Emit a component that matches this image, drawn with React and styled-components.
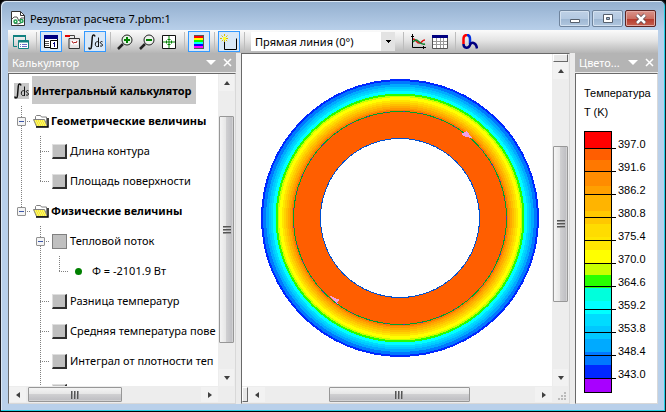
import styled, { createGlobalStyle, css } from 'styled-components';

const GlobalStyle = createGlobalStyle`
  * {
    box-sizing: border-box;
  }

  body {
    margin: 0;
    background: #000;
    font-family: "Noto Sans", "Open Sans", sans-serif;
    font-size: 11px;
    line-height: 16px;
    color: #000;
  }

  button, select {
    font: inherit;
    color: inherit;
    margin: 0;
    padding: 0;
  }
`

const plainButton = css`
  display: flex;
  align-items: center;
  justify-content: center;
  border: 0;
  background: none;
`

const Window = styled.div`
  display: flex;
  flex-direction: column;
  height: 100vh;
  padding: 0 7px 7px 6px;
  border: 1px solid #1c1c22;
  border-bottom: 1px solid #000;
  border-radius: 6px 6px 0 0;
  background: linear-gradient(#93afcf 0, #b9d0ea 30px, #b9d0ea 100%);
  box-shadow: inset -1px -1px 0 #22cfe4, inset 1px 1px 0 #dce8f4;
  overflow: hidden;
`

const TitleBar = styled.header`
  display: flex;
  align-items: flex-start;
  height: 29px;
  flex: none;
  padding-left: 4px;

  > svg {
    margin-top: 9px;
  }
`

const Title = styled.h1`
  flex: 1;
  margin: 10px 0 0 4px;
  font-size: 11px;
  line-height: 16px;
  font-weight: 400;
  white-space: nowrap;
`

const Caption = styled.div`
  display: flex;
  gap: 2px;
  margin: 9px 2px 0 0;
`

const CaptionButton = styled.button`
  ${plainButton}
  width: 31px;
  height: 17px;
  border: 1px solid ${props => props.$close ? '#5c2320' : '#6f849d'};
  border-radius: 2px;
  background: ${props => props.$close
    ? 'linear-gradient(#d9938a 0, #cb6f62 50%, #b5392b 51%, #c5604f 100%)'
    : 'linear-gradient(#bfd1e6 0, #b4c9e1 50%, #9db6d2 51%, #b1c7df 100%)'};
  box-shadow: inset 0 0 0 1px ${props => props.$close ? '#e2a9a2' : '#d3e1f0'};
`

const Client = styled.div`
  display: flex;
  flex-direction: column;
  flex: 1;
  min-height: 0;
  margin-left: 1px;
  background: #ebebeb;
`

const Toolbar = styled.div`
  display: flex;
  align-items: center;
  flex: none;
  height: 23px;
  padding: 0 2px;
  background: linear-gradient(#fbfbfb, #e4e4e4 45%, #b6b6b6);
`

const ToolButton = styled.button`
  ${plainButton}
  width: 22px;
  height: 21px;
  flex: none;
  border: 1px solid ${props => props.$active ? '#3399ff' : 'transparent'};
  background: ${props => props.$active ? '#d9e8f7' : 'none'};
`

const Separator = styled.i`
  width: 8px;
  height: 19px;
  flex: none;
  background: linear-gradient(#bdbdbd, #bdbdbd) 4px 0 / 1px 100% no-repeat;
`

const LineSelect = styled.select`
  width: 144px;
  height: 19px;
  margin: 0 4px 0 3px;
  padding-left: 4px;
  border: 0;
  border-radius: 0;
  appearance: none;
  background:
    linear-gradient(#000, #000) 135px 8px / 5px 1px no-repeat,
    linear-gradient(#000, #000) 136px 9px / 3px 1px no-repeat,
    linear-gradient(#000, #000) 137px 10px / 1px 1px no-repeat,
    linear-gradient(90deg, #fff 130px, #e3e3e3 130px);
`

const Workspace = styled.main`
  display: grid;
  grid-template-columns: 228px minmax(0, 1fr) 83px;
  gap: 5px;
  flex: 1;
  min-height: 0;
`

const Panel = styled.section`
  display: flex;
  flex-direction: column;
  min-width: 0;
  min-height: 0;
`

const PanelHeader = styled.div`
  display: flex;
  align-items: center;
  flex: none;
  gap: 6px;
  height: 19px;
  padding: 0 4px;
  background: #b4b4b4;
  color: #fff;

  h2 {
    flex: 1;
    margin: 0;
    font-size: 11px;
    font-weight: 400;
    overflow: hidden;
    text-overflow: ellipsis;
    white-space: nowrap;
  }
`

const HeaderButton = styled.button`
  ${plainButton}
  width: 10px;
  height: 12px;
  flex: none;
`

const PanelBody = styled.div`
  display: grid;
  grid-template-columns: minmax(0, 1fr) ${props => props.$scroll ? '17px' : ''};
  grid-template-rows: minmax(0, 1fr) ${props => props.$scroll ? '17px' : ''};
  flex: 1;
  min-height: 0;
  margin-top: ${props => props.$header ? '1px' : '0'};
  border: 1px solid #d8d8d8;
  border-top: 1px solid #696969;
  border-left: 1px solid #696969;
  background: #fff;
`

const Tree = styled.ul`
  margin: 0;
  padding: 2px 0 0 3px;
  list-style: none;
  overflow: hidden;
`

const TreeRow = styled.li`
  display: flex;
  align-items: center;
  height: 30px;
`

const dotsDown = 'repeating-linear-gradient(#808080 0 1px, transparent 1px 2px)';
const dotsAcross = 'repeating-linear-gradient(90deg, #808080 0 1px, transparent 1px 2px)';

const guides = {
  none: 'none',
  line: `${dotsDown} 9px 0 / 1px 30px no-repeat`,
  tee: `${dotsDown} 9px 0 / 1px 30px no-repeat, ${dotsAcross} 9px 15px / 10px 1px no-repeat`,
  elbow: `${dotsDown} 9px 0 / 1px 15px no-repeat, ${dotsAcross} 9px 15px / 10px 1px no-repeat`,
};

const Guide = styled.span`
  display: flex;
  align-items: center;
  justify-content: center;
  width: 19px;
  height: 30px;
  flex: none;
  background: ${props => guides[props.$kind]};
`

const Expander = styled.button`
  width: 9px;
  height: 9px;
  border: 1px solid #919191;
  border-radius: 1px;
  background: linear-gradient(#3c57a8, #3c57a8) 1px 3px / 5px 1px no-repeat, #f4f4f4;
`

const NodeIcon = styled.span`
  display: flex;
  align-items: center;
  justify-content: center;
  width: 19px;
  flex: none;

  svg {
    background: ${props => props.$selected ? '#c8c8c8' : 'none'};
  }
`

const Square = styled.i`
  width: 15px;
  height: 15px;
  background: #c0c0c0;
  border: 1px solid ${props => props.$flat ? '#808080' : '#dfdfdf'};
  ${props => !props.$flat && css`
    border-right: 2px solid #303030;
    border-bottom: 2px solid #303030;
  `}
`

const Dot = styled.i`
  width: 7px;
  height: 7px;
  border-radius: 50%;
  background: #008000;
`

const NodeLabel = styled.span`
  padding-left: ${props => props.$value ? '4px' : '1px'};
  white-space: nowrap;
  font-weight: ${props => props.$bold ? 700 : 400};
  ${props => props.$selected && css`
    height: 28px;
    margin: 0 0 2px 1px;
    padding: 0 4px 0 1px;
    line-height: 30px;
    background: #c8c8c8;
  `}
`

const Bar = styled.div`
  display: flex;
  flex-direction: ${props => props.$vertical ? 'column' : 'row'};
  align-items: stretch;
  min-width: 0;
  min-height: 0;
  padding: ${props => props.$vertical ? '0 1px' : '1px 0'};
  background: #ededed;
`

const Arrow = styled.button`
  ${plainButton}
  flex: 0 0 17px;
  background: #f2f2f2;
`

const Track = styled.div`
  flex: ${props => props.$size} 0 0;
`

const Thumb = styled.div`
  display: flex;
  align-items: center;
  justify-content: center;
  flex: ${props => props.$size} 0 0;
  border: 1px solid #979797;
  border-radius: 1px;
  background: linear-gradient(${props => props.$vertical ? '90deg' : '180deg'}, #f4f4f4 0, #e6e6e6 45%, #cfcfd1 50%, #c0c0c4 90%, #dcdcdc 100%);

  i {
    width: 8px;
    height: 8px;
    background: repeating-linear-gradient(${props => props.$vertical ? '180deg' : '90deg'}, #555 0 1px, #999 1px 2px, transparent 2px 3px);
  }
`

const SplitBox = styled.div`
  flex: 0 0 ${props => props.$vertical ? '8px' : '6px'};
  border: 1px solid #fff;
  border-right-color: #696969;
  border-bottom-color: #696969;
  background: #e8e8e8;
`

const Corner = styled.div`
  display: flex;
  align-items: flex-end;
  justify-content: flex-end;
  padding: 2px;
  background: #ededed;
`

const Plot = styled.svg`
  display: block;
  width: 100%;
  height: 100%;
`

const Legend = styled.div`
  padding: 10px 0 0 8px;
  font-family: "Liberation Sans", sans-serif;
  font-size: 11px;
  line-height: 19px;
  white-space: nowrap;
  overflow: hidden;

  h3 {
    margin: 0;
    font-size: 11px;
    font-weight: 400;
  }
`

const Scale = styled.div`
  display: flex;
  margin-top: 9px;
`

const ScaleBar = styled.div`
  width: 28px;
  height: 262px;
  border: 1px solid #000;
  background:
    repeating-linear-gradient(transparent 0 22px, #000 22px 23px) 0 -6px / 100% 254px no-repeat,
    linear-gradient(${props => props.$stops});
`

const ScaleLabels = styled.ol`
  margin: 0;
  padding: 0;
  list-style: none;
  line-height: 16px;

  li {
    height: 23px;
    padding: 5px 0 0 6px;
    background: linear-gradient(#000, #000) 0 17px / 4px 1px no-repeat;
  }
`

const bands = [
  ['#ff0000', 17], ['#ff5e00', 28], ['#ff7800', 40], ['#ff8c00', 54], ['#ffa000', 62],
  ['#ffb400', 79], ['#ffc800', 92], ['#ffdc00', 105], ['#ffe600', 118], ['#ffff00', 131],
  ['#c8ff00', 143], ['#28ff00', 156], ['#00ffdc', 169], ['#00ffff', 182], ['#00dcff', 194],
  ['#00c8ff', 207], ['#00aaff', 220], ['#0078ff', 233], ['#0028ff', 247], ['#a800ff', 260],
];

const bandStops = bands
  .map(([color, end], i) => `${color} ${i ? bands[i - 1][1] : 0}px ${end}px`)
  .join(', ');

const ticks = ['397.0', '391.6', '386.2', '380.8', '375.4', '370.0', '364.6', '359.2', '353.8', '348.4', '343.0'];

// outer radius of each isotherm band, cold to hot
const rings = [
  ['#0028ff', 139], ['#0078ff', 137], ['#00aaff', 134], ['#00c8ff', 131.5], ['#00dcff', 129.5],
  ['#00ffff', 127.5], ['#28ff00', 124.5], ['#c8ff00', 122.5], ['#ffff00', 121], ['#ffe600', 118],
  ['#ffd200', 116], ['#ffbe00', 114], ['#ffaa00', 112], ['#ff9600', 110], ['#ff7800', 108.5],
  ['#ff5e00', 107],
];

const nodes = [
  { guides: [], icon: 'integral', label: 'Интегральный калькулятор', bold: true, selected: true },
  { guides: ['tee'], open: true, icon: 'folder', label: 'Геометрические величины', bold: true },
  { guides: ['line', 'tee'], icon: 'square', label: 'Длина контура' },
  { guides: ['line', 'elbow'], icon: 'square', label: 'Площадь поверхности' },
  { guides: ['elbow'], open: true, icon: 'folder', label: 'Физические величины', bold: true },
  { guides: ['none', 'tee'], open: true, icon: 'flat', label: 'Тепловой поток' },
  { guides: ['none', 'line', 'elbow'], icon: 'dot', label: 'Ф = -2101.9 Вт', value: true },
  { guides: ['none', 'tee'], icon: 'square', label: 'Разница температур' },
  { guides: ['none', 'tee'], icon: 'square', label: 'Средняя температура пове' },
  { guides: ['none', 'tee'], icon: 'square', label: 'Интеграл от плотности теп' },
  { guides: ['none', 'tee'], icon: 'square', label: '' },
];

const Icon = ({ w = 16, h = 16, children }) => (
  <svg width={w} height={h} viewBox={`0 0 ${w} ${h}`} fill="none" aria-hidden="true">{children}</svg>
);

const IntegralIcon = () => (
  <Icon w={15}>
    <path d="M7 2.500C6.500.5 4.500.5 4.300 3L3.500 12.500C3.300 15.500 1.200 15.500.7 13.500" stroke="#111" strokeWidth="1.500" />
    <path d="M10.500 3.500V13M10.500 8c-1.500-1-3.200 0-3.200 2.200s1.700 3 3.200 1.800" stroke="#111" />
    <path d="M14.500 7.800c-1-.6-2.200-.2-2.200.8 0 1.300 2.200 1 2.200 2.400 0 1.300-1.500 1.500-2.500.8" stroke="#111" />
  </Icon>
);

const FolderIcon = () => (
  <Icon w={16} h={14}>
    <path d="M2.500 5V2.500l1-1h4l1 1.500h5v9" fill="#fff" stroke="#808080" />
    <path d="M.5 5.500h11l3 7H3.500z" fill="#f6ea30" stroke="#808080" />
    <path d="M2 7h9M3 9h9M4 11h9" stroke="#fffbb0" strokeDasharray="1 1" />
    <path d="M3 13h12V4" stroke="#000" strokeWidth="1.500" />
  </Icon>
);

const DocumentIcon = () => (
  <Icon w={15} h={17}>
    <path d="M.5 1.500h9l4 4v10H.5z" fill="#fff" stroke="#333" />
    <path d="M9.500 1.500v4h4" stroke="#333" />
    <path d="M1 9l2-2h3l2 4 2-3h3M3 13l4 1 3-1" stroke="#555" />
    <circle cx="4.500" cy="11.500" r="1.500" stroke="#20a050" strokeWidth="1.500" fill="#fff" />
    <circle cx="10.500" cy="11" r="1.500" stroke="#20a050" strokeWidth="1.500" fill="#fff" />
  </Icon>
);

const CascadeIcon = () => (
  <Icon>
    <path d="M4 12.500H.5V1.500h12V6" stroke="#108080" />
    <path d="M0 2h13" stroke="#108080" strokeWidth="2" />
    <path d="M5.500 6.500h10v8h-10z" fill="#fff" stroke="#108080" />
    <path d="M5 7.500h11" stroke="#108080" strokeWidth="2" />
    <path d="M7 10.500h1M7 12.500h1M9 10.500h5M9 12.500h5" stroke="#6a70c8" />
  </Icon>
);

const CalcPanelIcon = () => (
  <Icon>
    <path d="M1.500 2.500h13v11h-13z" fill="#fff" stroke="#000" />
    <path d="M1 3h14" stroke="#000080" strokeWidth="4" />
    <path d="M2 7.500h4M2 9.500h4M2 11.500h4" stroke="#555" />
    <path d="M7.500 6.500h7v8h-7z" fill="#fff" stroke="#000" />
    <path d="M11.500 8v5M10 9.500h1" stroke="#000080" />
  </Icon>
);

const ProbeIcon = () => (
  <Icon>
    <path d="M0 2h5" stroke="#e00000" strokeWidth="2" />
    <path d="M5 1.500h4.500V4" stroke="#444" />
    <path d="M4 4.500h10.500v10H4z" fill="#e8e4e4" stroke="#333" />
    <path d="M6 6.500h7v4H6z" fill="#fff" />
    <path d="M7 7l1 2h1l1-1 1 1 1-2" stroke="#b02020" />
  </Icon>
);

const ZoomIcon = ({ plus }) => (
  <Icon>
    <path d="M6 10L1 15" stroke="#222" strokeWidth="2.500" />
    <circle cx="10" cy="6" r="5" fill={plus ? '#e6f5e6' : '#eef2ee'} stroke="#222" />
    <path d={plus ? 'M7 6h6M10 3v6' : 'M7 6h6'} stroke="#008000" strokeWidth="2" />
  </Icon>
);

const FitIcon = () => (
  <Icon>
    <path d="M1.500 1.500h13v13h-13z" fill="#fff" stroke="#111" />
    <path d="M8 2v12M2 8h12M5.500 6.500v3M10.500 6.500v3M6.500 5.500h3M6.500 10.500h3" stroke="#008000" />
  </Icon>
);

const SpectrumIcon = () => (
  <Icon>
    <path d="M3 1h10v14H3z" fill="#555" />
    {['#f00', '#ff0', '#0f0', '#0ff', '#00f', '#f0f'].map((color, i) => (
      <path key={color} d={`M3 ${2 + i * 2}h9v2H3z`} fill={color} />
    ))}
  </Icon>
);

const ContourIcon = () => (
  <Icon w={18}>
    <path d="M4.500 8v7.500h12V4.500" stroke="#000" />
    <path d="M4.500 0v9M0 4.500h9M1.500 1.500l6 6M7.500 1.500l-6 6" stroke="#d8c000" strokeDasharray="2 1" />
    <path d="M3 3h3v3H3z" fill="#ffff30" />
  </Icon>
);

const GraphIcon = () => (
  <Icon>
    <path d="M2.500 0v13.500H16M1 2.500h3M13.500 12v3" stroke="#000" />
    <path d="M3 5c3 0 4 5 7 4 2-.5 2-3 5-3" stroke="#e01010" strokeWidth="1.500" />
    <path d="M3 8c2-2 3-3 5-1s4 4 7 3" stroke="#108030" strokeWidth="1.500" />
  </Icon>
);

const TableIcon = () => (
  <Icon>
    <path d="M.5 1.500h15v13H.5z" fill="#fff" stroke="#555" />
    <path d="M0 2.500h16" stroke="#000080" strokeWidth="3" />
    <path d="M1 7.500h14M1 10.500h14M4.500 4v10M8.500 4v10M11.500 4v10" stroke="#999" />
  </Icon>
);

const PipeIcon = () => (
  <Icon>
    <path d="M1.500 10V5c0-2.500 1.500-4 3.500-4" stroke="#f00" strokeWidth="2.500" />
    <path d="M5 1c2 0 3 1.500 3 4v5" stroke="#0030e0" strokeWidth="2.500" />
    <path d="M1.500 10c0 5 5.500 4.500 6.500 1s6-3 7 3.500" stroke="#000080" strokeWidth="2.500" />
  </Icon>
);

const arrowShapes = { up: 'M4 2L7 6H1z', down: 'M4 6L1 2h6z', left: 'M2 4l4-3v6z', right: 'M6 4L2 1v6z' };

const ArrowButton = ({ dir, label }) => (
  <Arrow aria-label={label}>
    <Icon w={8} h={8}><path d={arrowShapes[dir]} fill="#404040" /></Icon>
  </Arrow>
);

const ScrollBar = ({ vertical, split, before, size, after }) => (
  <Bar $vertical={vertical}>
    {split && <SplitBox $vertical={vertical} />}
    <ArrowButton dir={vertical ? 'up' : 'left'} label={vertical ? 'Вверх' : 'Влево'} />
    <Track $size={before} />
    <Thumb $vertical={vertical} $size={size}><i /></Thumb>
    <Track $size={after} />
    <ArrowButton dir={vertical ? 'down' : 'right'} label={vertical ? 'Вниз' : 'Вправо'} />
  </Bar>
);

const HeaderButtons = () => (
  <>
    <HeaderButton aria-label="Меню панели">
      <Icon w={10} h={6}><path d="M0 0h10L5 5z" fill="#fff" /></Icon>
    </HeaderButton>
    <HeaderButton aria-label="Закрыть панель">
      <Icon w={9} h={9}><path d="M1 1l7 7M8 1L1 8" stroke="#fff" strokeWidth="1.500" /></Icon>
    </HeaderButton>
  </>
);

const icons = {
  integral: <IntegralIcon />,
  folder: <FolderIcon />,
  square: <Square />,
  flat: <Square $flat />,
  dot: <Dot />,
};

const TreeNode = ({ node }) => (
  <TreeRow>
    {node.guides.map((kind, i) => (
      <Guide key={i} $kind={kind}>
        {node.open && i === node.guides.length - 1 && <Expander aria-label="Свернуть" />}
      </Guide>
    ))}
    <NodeIcon $selected={node.selected}>{icons[node.icon]}</NodeIcon>
    <NodeLabel $bold={node.bold} $selected={node.selected} $value={node.value}>{node.label}</NodeLabel>
  </TreeRow>
);

const RingPlot = () => (
  <Plot viewBox="0 0 310 330" shapeRendering="crispEdges" role="img" aria-label="Поле температур">
    {rings.map(([color, r]) => <circle key={color} cx="158" cy="163" r={r} fill={color} />)}
    <circle cx="158" cy="163" r="106.500" fill="none" stroke="#00a030" />
    <circle cx="158" cy="163" r="106.500" fill="none" stroke="#4040b0" strokeDasharray="2 16" />
    <circle cx="158" cy="163" r="79.500" fill="#fff" stroke="#0050d0" />
    <path d="M219 79l6-3 2 3 3 4-6-1z" fill="#f0a0e8" />
    <path d="M86 240l12 5-3 2 1 2z" fill="#f0a0e8" />
  </Plot>
);

const App = () => (
  <>
    <GlobalStyle />
    <Window>
      <TitleBar>
        <DocumentIcon />
        <Title>Результат расчета 7.pbm:1</Title>
        <Caption>
          <CaptionButton aria-label="Свернуть">
            <Icon w={12} h={12}><path d="M1.500 6.500h9v3h-9z" fill="#fff" stroke="#555f6c" /></Icon>
          </CaptionButton>
          <CaptionButton aria-label="Развернуть">
            <Icon w={12} h={12}>
              <path d="M1.500 1.500h9v8h-9z" fill="#fff" stroke="#555f6c" />
              <path d="M4.500 4.500h3v2h-3z" fill="#9db6d2" stroke="#555f6c" />
            </Icon>
          </CaptionButton>
          <CaptionButton $close aria-label="Закрыть">
            <Icon w={12} h={12}>
              <path d="M2 2l8 8M10 2l-8 8" stroke="#5a4a50" strokeWidth="4" />
              <path d="M2 2l8 8M10 2l-8 8" stroke="#fff" strokeWidth="2.500" />
            </Icon>
          </CaptionButton>
        </Caption>
      </TitleBar>
      <Client>
        <Toolbar>
          <ToolButton aria-label="Окна"><CascadeIcon /></ToolButton>
          <Separator />
          <ToolButton $active aria-label="Калькулятор"><CalcPanelIcon /></ToolButton>
          <ToolButton aria-label="Локальные значения"><ProbeIcon /></ToolButton>
          <ToolButton $active aria-label="Интегральные значения"><IntegralIcon /></ToolButton>
          <Separator />
          <ToolButton aria-label="Увеличить"><ZoomIcon plus /></ToolButton>
          <ToolButton aria-label="Уменьшить"><ZoomIcon /></ToolButton>
          <ToolButton aria-label="Показать всё"><FitIcon /></ToolButton>
          <Separator />
          <ToolButton $active aria-label="Цветовая шкала"><SpectrumIcon /></ToolButton>
          <Separator />
          <ToolButton $active aria-label="Контур"><ContourIcon /></ToolButton>
          <Separator />
          <LineSelect aria-label="Тип линии">
            <option>Прямая линия (0°)</option>
          </LineSelect>
          <Separator />
          <ToolButton aria-label="График"><GraphIcon /></ToolButton>
          <ToolButton aria-label="Таблица"><TableIcon /></ToolButton>
          <Separator />
          <ToolButton aria-label="Мастер"><PipeIcon /></ToolButton>
        </Toolbar>
        <Workspace>
          <Panel>
            <PanelHeader>
              <h2>Калькулятор</h2>
              <HeaderButtons />
            </PanelHeader>
            <PanelBody $scroll $header>
              <Tree>
                {nodes.map((node, i) => <TreeNode key={i} node={node} />)}
              </Tree>
              <ScrollBar vertical before={25} size={226} after={26} />
              <ScrollBar before={2} size={92} after={79} />
              <Corner />
            </PanelBody>
          </Panel>
          <Panel>
            <PanelBody $scroll>
              <RingPlot />
              <ScrollBar vertical split before={67} size={153} after={67} />
              <ScrollBar split before={64} size={140} after={66} />
              <Corner>
                <Icon w={10} h={10}>
                  <path d="M7 1h2v2H7zM7 4h2v2H7zM4 4h2v2H4zM7 7h2v2H7zM4 7h2v2H4zM1 7h2v2H1z" fill="#bbb" />
                </Icon>
              </Corner>
            </PanelBody>
          </Panel>
          <Panel>
            <PanelHeader>
              <h2>Цвето...</h2>
              <HeaderButtons />
            </PanelHeader>
            <PanelBody $header>
              <Legend>
                <h3>Температура</h3>
                <div>T (K)</div>
                <Scale>
                  <ScaleBar $stops={bandStops} />
                  <ScaleLabels>
                    {ticks.map(tick => <li key={tick}>{tick}</li>)}
                  </ScaleLabels>
                </Scale>
              </Legend>
            </PanelBody>
          </Panel>
        </Workspace>
      </Client>
    </Window>
  </>
);

export default App;
